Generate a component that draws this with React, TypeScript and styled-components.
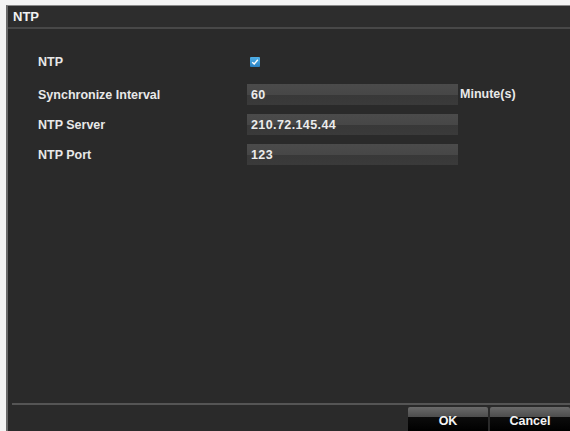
import styled, { createGlobalStyle } from 'styled-components';

const GlobalStyle = createGlobalStyle`
  html, body {
    margin: 0;
    padding: 0;
    background: #f4f4f4;
    font-family: 'Liberation Sans', Arial, sans-serif;
  }
`;

const Window = styled.section`
  box-sizing: border-box;
  margin: 5px 0 0 6px;
  height: 426px;
  display: flex;
  flex-direction: column;
  background: #2a2a2a;
  border-left: 2px solid #6a6a6a;
  border-top: 1px solid #8a8a8a;
`;

const TitleBar = styled.header`
  height: 18px;
  padding: 3px 0 0 5px;
  color: #f2f2f2;
  font-size: 13px;
  font-weight: bold;
  background: #2d2d2d;
  border-bottom: 2px solid #484848;
`;

const Body = styled.div`
  flex: 1;
  padding: 20px 0 0 30px;
`;

const FormGrid = styled.div`
  display: grid;
  grid-template-columns: 209px 211px auto;
  grid-auto-rows: 30px;
  align-items: center;
  & > :nth-child(-n + 3) {
    margin-bottom: 6px;
  }
`;

const Label = styled.span`
  color: #e8e8e8;
  font-size: 12.5px;
  font-weight: bold;
  padding-top: 1px;
`;

const Field = styled.div`
  box-sizing: border-box;
  height: 21px;
  padding: 4px 0 0 4px;
  color: #ececec;
  font-size: 12.5px;
  font-weight: bold;
  letter-spacing: 0.4px;
  background: linear-gradient(#4b4b4b 0%, #474747 50%, #383838 52%, #3a3a3a 100%);
`;

const Unit = styled.span`
  color: #e8e8e8;
  font-size: 12.5px;
  font-weight: bold;
  padding-left: 2px;
`;

const CheckBox = styled.span`
  display: inline-flex;
  align-items: center;
  justify-content: center;
  width: 10px;
  height: 10px;
  margin: 0 0 4px 3px;
  background: linear-gradient(#4fb0e8, #2a7fc0);
  border-radius: 1px;
`;

const Footer = styled.footer`
  display: flex;
  justify-content: flex-end;
  gap: 2px;
  margin-left: 4px;
  padding-top: 2px;
  border-top: 2px solid #555555;
`;

const Button = styled.button`
  width: 80px;
  height: 24px;
  padding: 3px 0 0;
  border: none;
  border-radius: 2px 2px 0 0;
  color: #f4f4f4;
  font-family: inherit;
  font-size: 12.5px;
  font-weight: bold;
  background: linear-gradient(#6a6a6a 0%, #4e4e4e 40%, #0c0c0c 42%, #000 100%);
`;

const rows = [
  { label: 'Synchronize Interval', value: '60', unit: 'Minute(s)' },
  { label: 'NTP Server', value: '210.72.145.44' },
  { label: 'NTP Port', value: '123' },
];

export default function App() {
  return (
    <>
      <GlobalStyle />
      <Window>
        <TitleBar>NTP</TitleBar>
        <Body>
          <FormGrid>
            <Label>NTP</Label>
            <div>
              <CheckBox>
                <svg width="8" height="8" viewBox="0 0 8 8">
                  <path d="M1.2 4.2 L3.2 6 L6.8 1.8" fill="none" stroke="#fff" strokeWidth="1.4" />
                </svg>
              </CheckBox>
            </div>
            <span />
            {rows.map((r) => (
              <>
                <Label key={r.label}>{r.label}</Label>
                <Field>{r.value}</Field>
                <Unit>{r.unit ?? ''}</Unit>
              </>
            ))}
          </FormGrid>
        </Body>
        <Footer>
          <Button>OK</Button>
          <Button>Cancel</Button>
        </Footer>
      </Window>
    </>
  );
}
